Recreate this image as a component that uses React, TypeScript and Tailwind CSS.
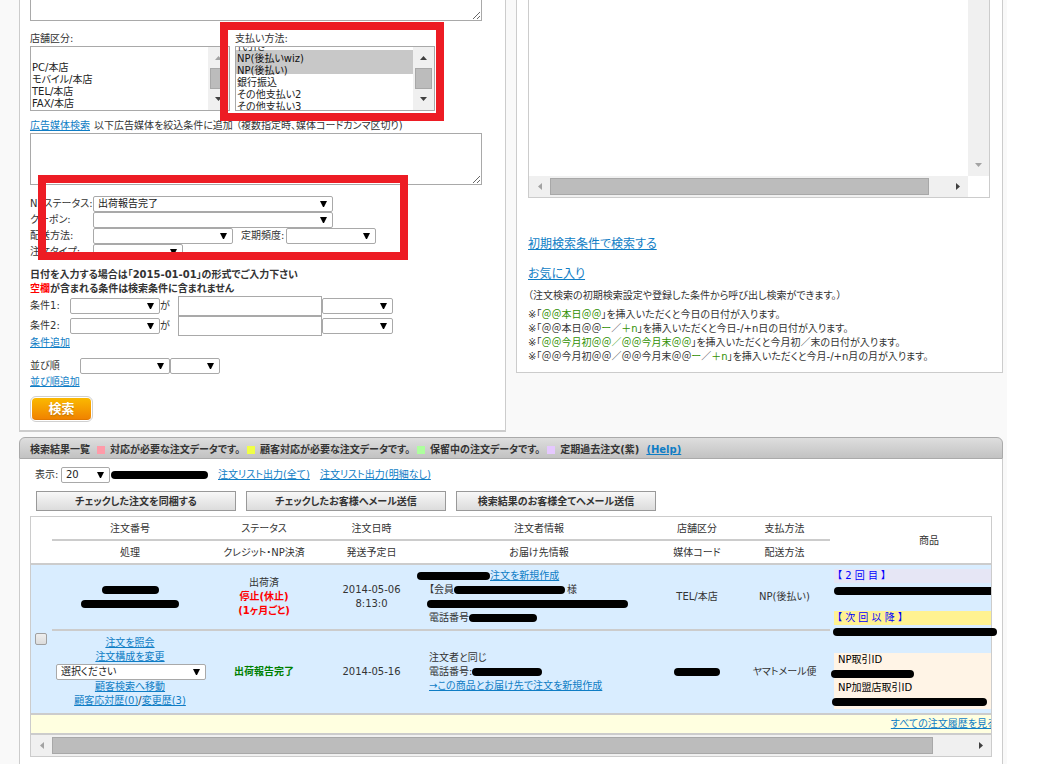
import { useLayoutEffect, useRef, type ReactNode } from "react";
import clsx from "clsx";

const fieldBorder = "border border-[#a9a9a9] bg-white";

function Arrow({ dir, muted }: { dir: "up" | "down" | "left" | "right"; muted?: boolean }) {
  const points = {
    up: "0,4 3.5,0 7,4",
    down: "0,0 7,0 3.5,4",
    left: "4,0 4,7 0,3.5",
    right: "0,0 4,3.5 0,7",
  }[dir];
  const vertical = dir === "up" || dir === "down";
  return (
    <svg
      aria-hidden="true"
      width={vertical ? 7 : 4}
      height={vertical ? 4 : 7}
      viewBox={vertical ? "0 0 7 4" : "0 0 4 7"}
      className={muted ? "fill-[#a3a3a3]" : "fill-[#404040]"}
    >
      <polygon points={points} />
    </svg>
  );
}

function Link({ children }: { children: ReactNode }) {
  return (
    <a href="#" className="text-[#0f7dc5] underline">
      {children}
    </a>
  );
}

function Picker({
  label,
  id,
  className,
  value = "",
  hiddenLabel,
}: {
  label: string;
  id: string;
  className: string;
  value?: string;
  hiddenLabel?: boolean;
}) {
  return (
    <span className={clsx("relative inline-flex h-4 shrink-0", className)}>
      <select
        id={id}
        aria-label={hiddenLabel ? label : undefined}
        className={clsx(fieldBorder, "h-4 w-full appearance-none rounded-[2px] pl-1 leading-[14px] text-[#222]")}
      >
        <option>{value}</option>
      </select>
      <svg
        aria-hidden="true"
        width="7"
        height="6"
        viewBox="0 0 7 6"
        className="pointer-events-none absolute top-[5px] right-[6px] fill-black"
      >
        <path d="M0 0h7L4 6H3z" />
      </svg>
    </span>
  );
}

function ListBox({
  id,
  label,
  options,
  selected = [],
  scroll = 0,
  atTop,
}: {
  id: string;
  label: string;
  options: string[];
  selected?: string[];
  scroll?: number;
  atTop?: boolean;
}) {
  const ref = useRef<HTMLSelectElement>(null);
  useLayoutEffect(() => {
    if (ref.current) ref.current.scrollTop = scroll;
  }, [scroll]);
  return (
    <div className="w-[200px]">
      <label htmlFor={id} className="block">
        {label}
      </label>
      <div className={clsx(fieldBorder, "flex h-[65px]")}>
        <select
          ref={ref}
          id={id}
          multiple
          defaultValue={selected}
          className="h-[63px] min-w-0 flex-1 overflow-hidden leading-[10px] text-[#222] [scrollbar-width:none]"
        >
          {options.map((option, i) => (
            <option
              key={i}
              value={option}
              className="h-3 min-h-0 p-0 pl-px leading-[10px] checked:bg-[#c8c8c8] checked:bg-linear-to-r checked:from-[#c8c8c8] checked:to-[#c8c8c8]"
            >
              {option || "\u00a0"}
            </option>
          ))}
        </select>
        <div className="flex w-[21px] flex-col items-center justify-between bg-[#f0f0f0] py-[9px]">
          <Arrow dir="up" muted={atTop} />
          <div className="h-[21px] w-[17px] border border-[#a8a8a8] bg-[#bcbcbc]" />
          <Arrow dir="down" />
        </div>
      </div>
    </div>
  );
}

function HorizontalBar({ thumb, className }: { thumb: string; className?: string }) {
  return (
    <div className={clsx("flex h-[21px] items-center bg-[#f0f0f0]", className)}>
      <div className="flex w-[21px] justify-center">
        <Arrow dir="left" muted />
      </div>
      <div className="min-w-0 flex-1">
        <div className={clsx("h-[17px] border border-[#a8a8a8] bg-[#bcbcbc]", thumb)} />
      </div>
      <div className="flex w-[21px] justify-center">
        <Arrow dir="right" />
      </div>
    </div>
  );
}

function Mask({ className }: { className: string }) {
  return <span className={clsx("inline-block h-2 shrink-0 rounded-full bg-black align-middle", className)} />;
}

function SearchPanel() {
  return (
    <section className="relative border border-b-2 border-t-0 border-[#ccc] bg-white px-[10px] pb-2">
      <textarea
        aria-label="検索条件"
        className={clsx(fieldBorder, "block h-[21px] w-[452px] border-t-0")}
      />
      <div className="mt-[11px] flex gap-[5px]">
        <ListBox
          id="shop"
          label="店舗区分:"
          options={["", "PC/本店", "モバイル/本店", "TEL/本店", "FAX/本店", "WEB/本店", "店頭/本店"]}
          atTop
        />
        <ListBox
          id="payment"
          label="支払い方法:"
          options={["代引き", "NP(後払いwiz)", "NP(後払い)", "銀行振込", "その他支払い2", "その他支払い3", "その他支払い4", "その他支払い5"]}
          selected={["NP(後払いwiz)", "NP(後払い)"]}
          scroll={9}
        />
      </div>
      <div className="mt-2 flex gap-1">
        <Link>広告媒体検索</Link>
        <label htmlFor="media">以下広告媒体を絞込条件に追加 （複数指定時、媒体コードカンマ区切り)</label>
      </div>
      <textarea id="media" className={clsx(fieldBorder, "block h-[52px] w-[452px]")} />

      <div className="mt-[11px] leading-4">
        <div className="flex">
          <label htmlFor="np" className="w-[63px]">NPステータス:</label>
          <Picker id="np" label="NPステータス" value="出荷報告完了" className="w-[240px]" />
        </div>
        <div className="flex">
          <label htmlFor="coupon" className="w-[63px]">クーポン:</label>
          <Picker id="coupon" label="クーポン" className="w-[240px]" />
        </div>
        <div className="flex">
          <label htmlFor="delivery" className="w-[63px]">配送方法:</label>
          <Picker id="delivery" label="配送方法" className="w-[140px]" />
          <label htmlFor="cycle" className="ml-2 w-[45px]">定期頻度:</label>
          <Picker id="cycle" label="定期頻度" className="w-[90px]" />
        </div>
        <div className="flex">
          <label htmlFor="type" className="w-[63px]">注文タイプ:</label>
          <Picker id="type" label="注文タイプ" className="w-[90px]" />
        </div>
      </div>

      <p className="mt-2 font-bold">
        日付を入力する場合は「2015-01-01」の形式でご入力下さい
        <br />
        <span className="text-[#f00]">空欄</span>が含まれる条件は検索条件に含まれません
      </p>
      {[1, 2].map((n) => (
        <div key={n} className="flex items-center">
          <label htmlFor={`field${n}`} className="w-10">条件{n}:</label>
          <Picker id={`field${n}`} label={`条件${n}`} className="w-[90px]" />
          <span className="w-[18px]">が</span>
          <input aria-label={`条件${n}の値`} className={clsx(fieldBorder, "h-5 w-[144px]")} />
          <Picker id={`operator${n}`} label={`条件${n}の比較`} hiddenLabel className="w-[71px]" />
        </div>
      ))}
      <Link>条件追加</Link>
      <div className="mt-2 flex leading-4">
        <label htmlFor="sort" className="w-[50px]">並び順</label>
        <Picker id="sort" label="並び順" className="w-[90px]" />
        <Picker id="order" label="昇順・降順" hiddenLabel className="w-[50px]" />
      </div>
      <div className="leading-4">
        <Link>並び順追加</Link>
      </div>
      <button className="mt-[6px] block h-[26px] w-[63px] rounded-md border border-[#d0d0d0] bg-white p-px">
        <span className="flex h-full items-center justify-center rounded-[4px] border-b border-[#e07800] bg-linear-to-b from-[#fab900] to-[#f08300] text-[13px] font-bold text-white text-shadow-sm">
          検索
        </span>
      </button>

      <div className="pointer-events-none absolute top-[22px] left-[200px] h-[99px] w-[224px] border-8 border-[#ed1c24]" />
      <div className="pointer-events-none absolute top-[175px] left-[18px] h-[85px] w-[370px] border-8 border-[#ed1c24]" />
    </section>
  );
}

function PresetPanel() {
  const green = "text-[#2f8f00]";
  return (
    <section className="border border-t-0 border-[#ccc] bg-white px-[11px] pb-2">
      <div className="mr-px border border-t-0 border-[#ccc]">
        <div className="flex h-44">
          <div className="flex-1" />
          <div className="flex w-[21px] items-end justify-center bg-[#f0f0f0] pb-[9px]">
            <Arrow dir="down" muted />
          </div>
        </div>
        <HorizontalBar thumb="mr-[18px]" className="mr-[21px]" />
      </div>
      <div className="mt-[37px] text-xs leading-[18px]">
        <Link>初期検索条件で検索する</Link>
      </div>
      <div className="mt-3 text-xs leading-[18px]">
        <Link>お気に入り</Link>
      </div>
      <p className="mt-[6px]">（注文検索の初期検索設定や登録した条件から呼び出し検索ができます。）</p>
      <ul className="mt-[5px]">
        <li>
          ※「<span className={green}>＠＠本日＠＠</span>」を挿入いただくと今日の日付が入ります。
        </li>
        <li>
          ※「＠＠本日＠＠<span className={green}>ー</span>／<span className={green}>＋n</span>」を挿入いただくと今日-/+n日の日付が入ります。
        </li>
        <li>
          ※「<span className={green}>＠＠今月初＠＠／＠＠今月末＠＠</span>」を挿入いただくと今月初／末の日付が入ります。
        </li>
        <li>
          ※「＠＠今月初＠＠／＠＠今月末＠＠<span className={green}>ー</span>／<span className={green}>＋n</span>」を挿入いただくと今月-/+n月の月が入ります。
        </li>
      </ul>
    </section>
  );
}

function Legend({ color, children }: { color: string; children: ReactNode }) {
  return (
    <span className="flex items-center gap-[5px]">
      <i className={clsx("size-2", color)} />
      {children}
    </span>
  );
}

const line = "border-b-2 border-[#ccc]";

function OrderTable() {
  return (
    <table className="w-[997px] table-fixed border-separate border-spacing-0 text-center">
      <colgroup>
        <col className="w-[21px]" />
        <col className="w-[156px]" />
        <col className="w-[112px]" />
        <col className="w-[103px]" />
        <col className="w-[232px]" />
        <col className="w-[84px]" />
        <col className="w-[91px]" />
        <col className="w-[198px]" />
      </colgroup>
      <thead>
        <tr className="h-6">
          <th rowSpan={2} className={line} />
          {["注文番号", "ステータス", "注文日時", "注文者情報", "店舗区分", "支払方法"].map((name) => (
            <th key={name} className={clsx(line, "p-0 pt-[2px] font-normal")}>{name}</th>
          ))}
          <th rowSpan={2} className={clsx(line, "p-0 pt-[2px] font-normal")}>商品</th>
        </tr>
        <tr className="h-6">
          {["処理", "クレジット・NP決済", "発送予定日", "お届け先情報", "媒体コード", "配送方法"].map((name) => (
            <th key={name} className={clsx(line, "p-0 pt-[2px] font-normal")}>{name}</th>
          ))}
        </tr>
      </thead>
      <tbody className="bg-[#d9edff]">
        <tr className="h-[66px]">
          <td rowSpan={2} className={clsx(line, "p-0")}>
            <input
              type="checkbox"
              aria-label="注文を選択"
              className="ml-1 block size-3 appearance-none rounded-[2px] border border-[#a0a0a0] bg-linear-to-b from-[#eee] to-[#dcdcdc]"
            />
          </td>
          <td className={clsx(line, "p-0")}>
            <div className="flex h-[14px] items-center justify-center"><Mask className="w-[57px]" /></div>
            <div className="flex h-[14px] items-center justify-center"><Mask className="w-[98px]" /></div>
          </td>
          <td className={clsx(line, "p-0")}>
            出荷済
            <b className="block text-[#f00]">停止(休止)<br />(1ヶ月ごと)</b>
          </td>
          <td className={clsx(line, "p-0")}>2014-05-06<br />8:13:0</td>
          <td className={clsx(line, "p-0 pl-[6px] text-left whitespace-nowrap")}>
            <div className="-ml-3 flex h-[14px] items-center"><Mask className="w-[73px]" /><Link>注文を新規作成</Link></div>
            <div className="flex h-[14px] items-center">【会員<Mask className="mr-[2px] w-[111px]" />様</div>
            <div className="-ml-[2px] flex h-[14px] items-center"><Mask className="w-[201px]" /></div>
            <div className="flex h-[14px] items-center">電話番号<Mask className="w-[68px]" /></div>
          </td>
          <td className={clsx(line, "p-0")}>TEL/本店</td>
          <td className={clsx(line, "p-0")}>NP(後払い)</td>
          <td rowSpan={2} className={clsx(line, "p-0 pl-1 text-left")}>
            <div className="bg-[#e6e6f5] px-[3px] text-[#00f]">【 2 回 目 】</div>
            <div className="flex h-7 items-start pt-1"><Mask className="w-[160px]" /></div>
            <div className="bg-[#fff291] px-[3px] text-[#00f]">【 次 回 以 降 】</div>
            <div className="h-7" />
            <div className="bg-[#fff4e6] text-black">
              <div className="px-1">NP取引ID</div>
              <div className="-ml-[3px] flex h-[14px] items-center"><Mask className="w-[83px]" /></div>
              <div className="px-1">NP加盟店取引ID</div>
              <div className="-ml-[2px] flex h-[14px] items-center"><Mask className="w-[155px]" /></div>
            </div>
          </td>
        </tr>
        <tr className="h-[84px]">
          <td className={clsx(line, "p-0")}>
            <div><Link>注文を照会</Link></div>
            <div><Link>注文構成を変更</Link></div>
            <div className="flex pl-1"><Picker id="action" label="処理" hiddenLabel value="選択ください" className="w-[150px]" /></div>
            <div><Link>顧客検索へ移動</Link></div>
            <div><Link>顧客応対歴(0)</Link>/<Link>変更歴(3)</Link></div>
          </td>
          <td className={clsx(line, "p-0 font-bold text-[#008000]")}>出荷報告完了</td>
          <td className={clsx(line, "p-0")}>2014-05-16</td>
          <td className={clsx(line, "p-0 pl-[6px] text-left whitespace-nowrap")}>
            注文者と同じ
            <div className="flex h-[14px] items-center">電話番号:<Mask className="w-[70px]" /></div>
            <Link>→この商品とお届け先で注文を新規作成</Link>
          </td>
          <td className={clsx(line, "p-0")}>
            <div className="flex h-[14px] items-center justify-center"><Mask className="w-[46px]" /></div>
          </td>
          <td className={clsx(line, "p-0")}>ヤマトメール便</td>
        </tr>
        <tr className="h-5 bg-[#ffffe0]">
          <td colSpan={8} className={clsx(line, "p-0 pr-8 text-right")}>
            <Link>すべての注文履歴を見る</Link>
          </td>
        </tr>
      </tbody>
    </table>
  );
}

function ResultsPanel() {
  return (
    <section className="relative mt-[5px] flex-1">
      <h2 className="flex h-[22px] items-center gap-[7px] rounded-t-md border border-[#aaa] bg-linear-to-b from-[#dedede] to-[#c2c2c2] px-[10px] pt-1 font-bold whitespace-nowrap">
        検索結果一覧
        <Legend color="bg-[#ff9ba9]">対応が必要な注文データです。</Legend>
        <Legend color="bg-[#f0ff45]">顧客対応が必要な注文データです。</Legend>
        <Legend color="bg-[#adff9d]">保留中の注文データです。</Legend>
        <Legend color="bg-[#e5c8ff]">定期過去注文(紫)</Legend>
        <Link>(Help)</Link>
      </h2>
      <div className="h-full border-x border-[#ccc] bg-white px-[10px] pt-2">
        <div className="flex items-center pl-[5px] leading-4">
          <label htmlFor="rows" className="w-[26px]">表示:</label>
          <Picker id="rows" label="表示" value="20" className="w-[49px]" />
          <Mask className="mr-[10px] ml-px w-[97px]" />
          <Link>注文リスト出力(全て)</Link>
          <span className="w-[10px]" />
          <Link>注文リスト出力(明細なし)</Link>
        </div>
        <div className="mt-2 flex gap-[10px] pl-[6px]">
          {["チェックした注文を同梱する", "チェックしたお客様へメール送信", "検索結果のお客様全てへメール送信"].map((name) => (
            <button
              key={name}
              className="h-5 w-[200px] border border-[#999] bg-linear-to-b from-[#f8f8f8] to-[#dcdcdc] pt-px font-bold"
            >
              {name}
            </button>
          ))}
        </div>
        <div className="mt-[5px] border border-[#ccc]">
          <div className="overflow-hidden">
            <OrderTable />
          </div>
          <HorizontalBar thumb="mr-[37px]" />
        </div>
      </div>
      <Mask className="absolute top-[191px] right-[6px] w-[164px]" />
    </section>
  );
}

export default function App() {
  return (
    <main
      lang="ja"
      className="flex h-screen flex-col overflow-hidden bg-white font-['DejaVu_Sans','Noto_Sans_CJK_JP',sans-serif] text-[10px] leading-[14px] text-[#333] [font-feature-settings:'palt']"
    >
      <div className="mr-[34px] flex flex-1 flex-col bg-[#f9f9f9] pr-1 pl-[19px]">
        <div className="grid grid-cols-2 items-start gap-[10px]">
          <SearchPanel />
          <PresetPanel />
        </div>
        <ResultsPanel />
      </div>
    </main>
  );
}
